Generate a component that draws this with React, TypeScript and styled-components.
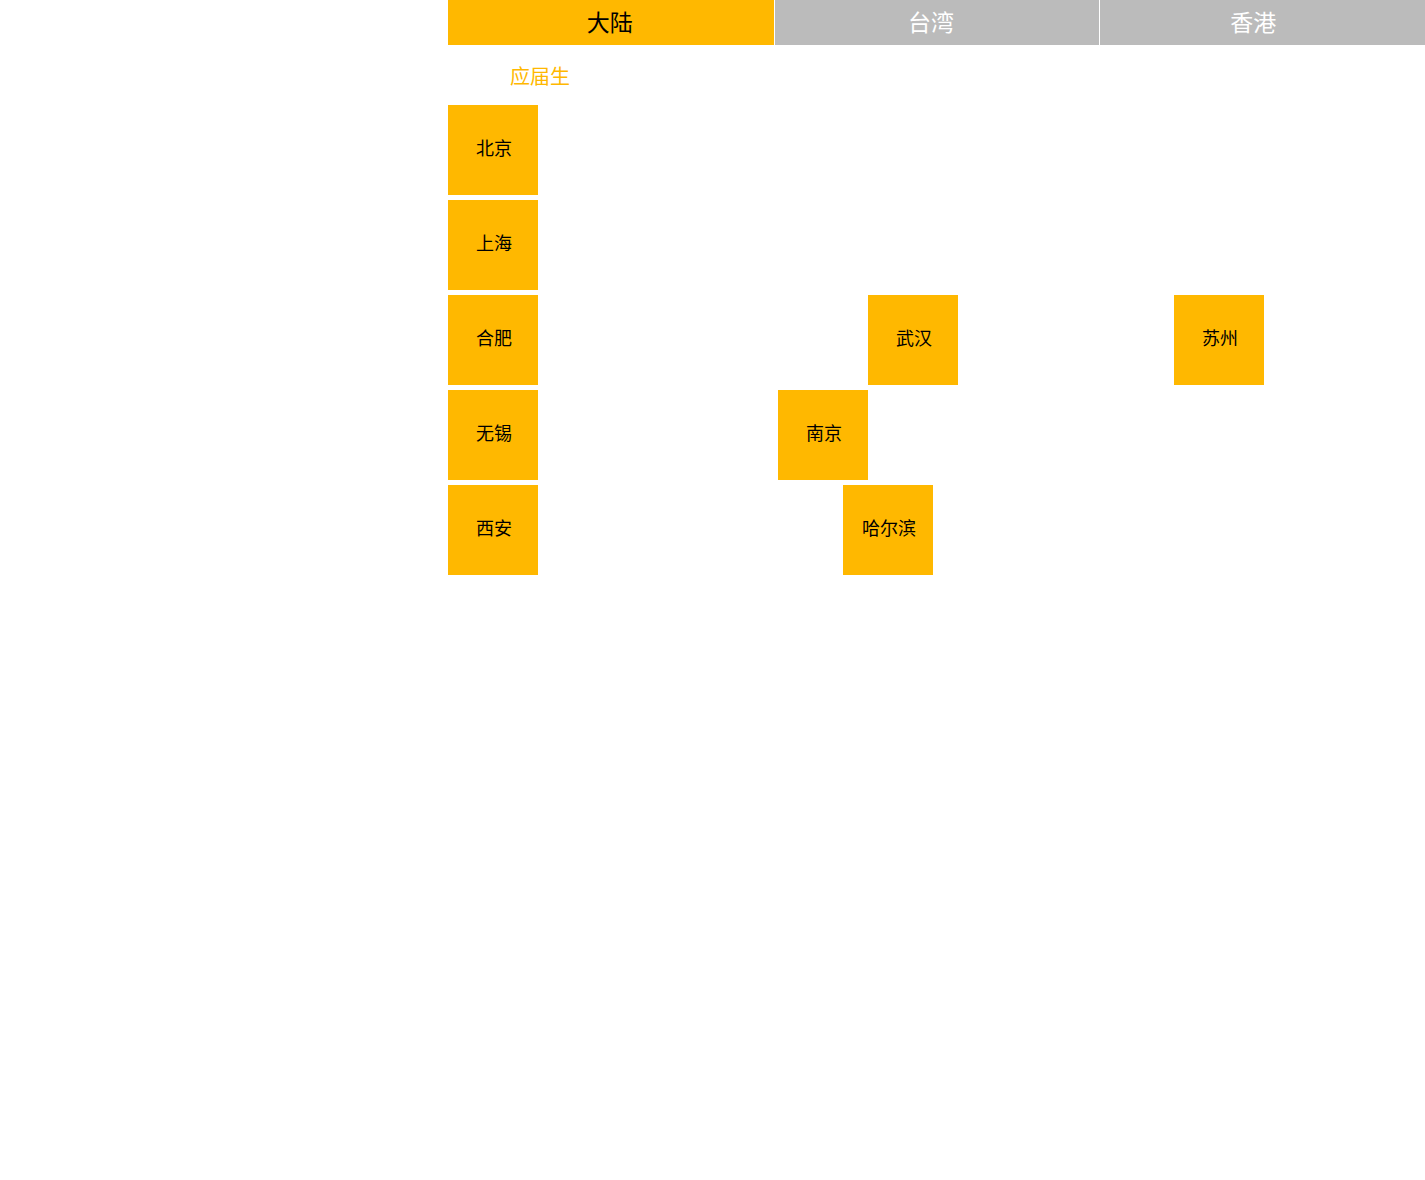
import React from "react";
import styled, { createGlobalStyle } from "styled-components";

const Global = createGlobalStyle`
  html, body { margin: 0; padding: 0; background: #fff; }
  body { font-family: "Noto Sans CJK SC", "Noto Sans", sans-serif; }
`;

const Page = styled.div`
  margin-left: 448px;
  width: 977px;
`;

const TabBar = styled.div`
  display: grid;
  grid-template-columns: repeat(3, minmax(0, 1fr));
  height: 45px;
`;

const Tab = styled.div<{ $active?: boolean; $shift: number }>`
  display: flex;
  align-items: center;
  justify-content: center;
  box-sizing: border-box;
  padding-bottom: 4px;
  padding-right: ${(p) => p.$shift}px;
  background: ${(p) => (p.$active ? "#ffb800" : "#bbbbbb")};
  color: ${(p) => (p.$active ? "#000" : "#fff")};
  font-size: 23px;
  & + & { border-left: 1px solid #fff; }
`;

const SubLabel = styled.div`
  height: 60px;
  display: flex;
  align-items: center;
  padding-left: 62px;
  color: #ffb800;
  font-size: 20px;
`;

const Board = styled.div`
  display: flex;
  flex-direction: column;
  gap: 5px;
`;

const Row = styled.div`
  display: flex;
  height: 90px;
`;

const Card = styled.div<{ $offset: number }>`
  width: 90px;
  height: 90px;
  margin-left: ${(p) => p.$offset}px;
  background: #ffb800;
  color: #000;
  font-size: 18px;
  display: flex;
  align-items: center;
  justify-content: center;
  padding-left: 2px;
  padding-bottom: 7px;
  box-sizing: border-box;
  flex-shrink: 0;
`;

const tabs = [
  { name: "大陆", shift: 2, active: true },
  { name: "台湾", shift: 12, active: false },
  { name: "香港", shift: 19, active: false },
];

const rows: { name: string; x: number }[][] = [
  [{ name: "北京", x: 0 }],
  [{ name: "上海", x: 0 }],
  [
    { name: "合肥", x: 0 },
    { name: "武汉", x: 420 },
    { name: "苏州", x: 726 },
  ],
  [
    { name: "无锡", x: 0 },
    { name: "南京", x: 330 },
  ],
  [
    { name: "西安", x: 0 },
    { name: "哈尔滨", x: 395 },
  ],
];

export default function App() {
  return (
    <>
      <Global />
      <Page>
        <TabBar>
          {tabs.map((t) => (
            <Tab key={t.name} $active={t.active} $shift={t.shift}>
              {t.name}
            </Tab>
          ))}
        </TabBar>
        <SubLabel>应届生</SubLabel>
        <Board>
          {rows.map((row, i) => (
            <Row key={i}>
              {row.map((c, j) => {
                const prevEnd = j === 0 ? 0 : row[j - 1].x + 90;
                return (
                  <Card key={c.name} $offset={c.x - prevEnd}>
                    {c.name}
                  </Card>
                );
              })}
            </Row>
          ))}
        </Board>
      </Page>
    </>
  );
}
